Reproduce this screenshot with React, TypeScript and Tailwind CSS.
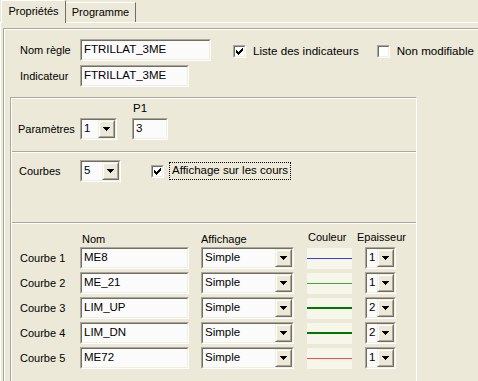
import React from 'react';

const sunkenOuter = 'border border-t-[#aca899] border-l-[#aca899] border-b-white border-r-white';
const sunkenInner = 'border border-t-[#716f64] border-l-[#716f64] border-b-[#f1efe2] border-r-[#f1efe2]';
const raisedOuter = 'border border-t-[#f1efe2] border-l-[#f1efe2] border-b-[#716f64] border-r-[#716f64]';
const raisedInner = 'border border-t-white border-l-white border-b-[#aca899] border-r-[#aca899]';

function TextField({ className, value }: { className: string; value: string }) {
  return (
    <div className={`h-[22px] shrink-0 ${sunkenOuter} ${className}`}>
      <div className={`h-full ${sunkenInner} bg-[#fbfbfb] flex items-center pl-[2px] text-[11.5px] text-black`}>
        {value}
      </div>
    </div>
  );
}

function Arrow() {
  return (
    <svg width="7" height="4" viewBox="0 0 7 4" shapeRendering="crispEdges">
      <rect x="0" y="0" width="7" height="1" fill="#000" />
      <rect x="1" y="1" width="5" height="1" fill="#000" />
      <rect x="2" y="2" width="3" height="1" fill="#000" />
      <rect x="3" y="3" width="1" height="1" fill="#000" />
    </svg>
  );
}

function Combo({ className, value }: { className: string; value: string }) {
  return (
    <div className={`h-[22px] shrink-0 ${sunkenOuter} ${className}`}>
      <div className={`h-full flex ${sunkenInner} bg-[#fbfbfb]`}>
        <div className="flex-1 flex items-center pl-[2px] text-[11.5px] text-black overflow-hidden">{value}</div>
        <div className={`w-[17px] h-full ${raisedOuter}`}>
          <div className={`h-full ${raisedInner} bg-[#ece9d8] flex items-center justify-center`}>
            <Arrow />
          </div>
        </div>
      </div>
    </div>
  );
}

// classic 7x7 tick, drawn column by column
const TICK = [2, 3, 4, 3, 2, 1, 0];

function CheckBox({ checked }: { checked: boolean }) {
  return (
    <div className={`w-[13px] h-[13px] shrink-0 ${sunkenOuter}`}>
      <div className={`w-full h-full ${sunkenInner} bg-white flex items-center justify-center`}>
        {checked && (
          <svg width="7" height="7" viewBox="0 0 7 7" shapeRendering="crispEdges">
            {TICK.map((top, i) => (
              <rect key={i} x={i} y={top} width="1" height="3" fill="#000" />
            ))}
          </svg>
        )}
      </div>
    </div>
  );
}

function Etched() {
  return (
    <div>
      <div className="h-px bg-[#aca899]" />
      <div className="h-px bg-white" />
    </div>
  );
}

const CURVES = [
  { name: 'ME8', width: '1', line: 'h-px bg-[#3a3aff]' },
  { name: 'ME_21', width: '1', line: 'h-px bg-[#3fa83f]' },
  { name: 'LIM_UP', width: '2', line: 'h-[2px] bg-[#007800]' },
  { name: 'LIM_DN', width: '2', line: 'h-[2px] bg-[#007800]' },
  { name: 'ME72', width: '1', line: 'h-px bg-[#ff4a4a]' },
];

export default function App() {
  return (
    <div className="w-[478px] h-[381px] overflow-hidden bg-[#ece9d8] text-[11px] text-black font-['Liberation_Sans',Arial,sans-serif] leading-none">
      {/* tabs */}
      <div className="h-[22px] flex items-end">
        <div className="ml-[1px] w-[65px] h-[23px] -mb-px relative z-10 bg-[#ece9d8] border-t border-l border-white border-r border-r-[#716f64] flex items-center justify-center pb-[1px]">
          Propriétés
        </div>
        <div className="w-[70px] h-[20px] bg-[#ece9d8] border-t border-white border-r border-r-[#716f64] flex items-center justify-center">
          Programme
        </div>
      </div>

      {/* tab body */}
      <div className="w-[520px] h-[400px] border-t border-l border-white pt-[5px] pl-[2px]">
        <div className="h-full border-t border-l border-[#aca899]">
          <div className="h-full border-t border-l border-white">
            {/* Nom règle */}
            <div className="mt-[9px] pl-[15px] h-[22px] flex items-center">
              <span className="w-[60px]">Nom règle</span>
              <TextField className="w-[131px]" value="FTRILLAT_3ME" />
              <div className="ml-[22px] mt-[2px]">
                <CheckBox checked />
              </div>
              <span className="ml-[7px] mt-[2px] text-[11.6px]">Liste des indicateurs</span>
              <div className="ml-[18px] mt-[2px]">
                <CheckBox checked={false} />
              </div>
              <span className="ml-[7px] mt-[2px] text-[11.6px]">Non modifiable</span>
            </div>

            {/* Indicateur */}
            <div className="mt-[4px] pl-[15px] h-[22px] flex items-center">
              <span className="w-[60px]">Indicateur</span>
              <TextField className="w-[109px]" value="FTRILLAT_3ME" />
            </div>

            {/* group */}
            <div className="mt-[10px] ml-[5px] w-[407px] h-[300px] border-t border-l border-[#aca899] border-r border-r-white">
              <div className="h-full border-t border-l border-white">
                {/* Paramètres */}
                <div className="h-[52px] pl-[6px] pt-[4px] flex items-end pb-[11px]">
                  <div className="h-[22px] flex items-center">
                    <span className="w-[62px]">Paramètres</span>
                    <Combo className="w-[37px]" value="1" />
                  </div>
                  <div className="ml-[15px] flex flex-col">
                    <span className="h-[14px] mb-[1px] pl-[1px] text-[11.5px]">P1</span>
                    <TextField className="w-[36px]" value="3" />
                  </div>
                </div>
                <Etched />

                {/* Courbes */}
                <div className="h-[69px] pl-[7px] pt-[7px]">
                  <div className="h-[22px] flex items-center">
                    <span className="w-[61px]">Courbes</span>
                    <Combo className="w-[41px]" value="5" />
                    <div className="ml-[30px]">
                      <CheckBox checked />
                    </div>
                    <span className="ml-[5px] h-[18px] px-[2px] flex items-center border border-dotted border-black text-[11.5px]">
                      Affichage sur les cours
                    </span>
                  </div>
                </div>
                <Etched />

                {/* Curves table */}
                <div className="pl-[8px] pt-[7px]">
                  <div className="h-[14px] flex items-end">
                    <span className="w-[60px]" />
                    <span className="w-[109px] pl-[2px]">Nom</span>
                    <span className="ml-[12px] w-[93px]">Affichage</span>
                    <span className="ml-[13px] w-[45px] pl-[1px] mb-[2px]">Couleur</span>
                    <span className="ml-[5px] mb-[2px]">Epaisseur</span>
                  </div>
                  <div className="mt-[2px] flex flex-col gap-[3px]">
                    {CURVES.map((c, i) => (
                      <div key={c.name} className="h-[22px] flex items-center">
                        <span className="w-[60px]">Courbe {i + 1}</span>
                        <TextField className="w-[109px]" value={c.name} />
                        <Combo className="ml-[12px] w-[93px]" value="Simple" />
                        <div className="ml-[13px] w-[45px] h-[21px] bg-[#f6f6ea] flex items-center">
                          <div className={`w-full ${c.line}`} />
                        </div>
                        <Combo className="ml-[13px] w-[31px]" value={c.width} />
                      </div>
                    ))}
                  </div>
                </div>
              </div>
            </div>
          </div>
        </div>
      </div>
    </div>
  );
}
